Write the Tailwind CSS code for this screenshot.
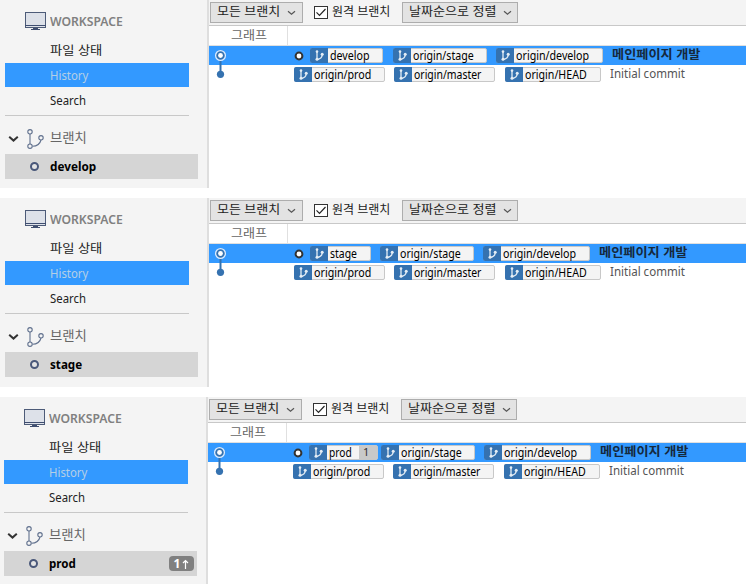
<!DOCTYPE html>
<html lang="ko">
<head>
<meta charset="utf-8">
<title>Branches</title>
<script src="https://cdn.jsdelivr.net/npm/@tailwindcss/browser@4"></script>
</head>
<body class="w-[746px] h-[584px] overflow-hidden bg-white font-['Noto_Sans','Noto_Sans_CJK_KR',sans-serif] text-[12px] leading-[18px] text-[#222]">
<main id="app" class="flex flex-col gap-[10px]"></main>
<script>
const t = (text, w, cls = '') => `<span class="block shrink-0 whitespace-nowrap ${cls}" style="width:${w}px"><span class="inline-block origin-left" data-w="${w}">${text}</span></span>`;

const chevron = `<svg class="shrink-0" width="9" height="6" viewBox="0 0 9 6" fill="none" stroke="#555" stroke-width="1.2"><path d="M1 1.2 4.5 4.2 8 1.2"/></svg>`;

const badge = ([name, w, tw, gap, count]) => `
  <div class="flex shrink-0 h-[15px] rounded-[2px] border border-[#c8c8c8] bg-[#f4f4f4] text-black" style="width:${w}px;margin-right:${gap}px">
    <div class="-my-px -ml-px w-[18px] h-[15px] rounded-l-[2px] bg-[#3572b0] shrink-0 flex items-center justify-center">
      <svg width="12" height="13" viewBox="0 0 12 13" fill="none" stroke="#e4edf5" stroke-width="1.3"><path d="M4 3v7M4.5 10.5Q9 9.5 9.2 6"/><g fill="#e4edf5" stroke="none"><circle cx="4" cy="2.6" r="1.3"/><circle cx="4" cy="10.3" r="1.5"/><circle cx="9.2" cy="5.2" r="1.5"/></g></svg>
    </div>
    <div class="pl-[2px] leading-[14px]">${t(name, tw)}</div>
    ${count ? `<div class="ml-auto w-[18px] bg-[#c9c9c9] text-[#333] text-[11px] leading-[12px] pl-[4px]">${count}</div>` : ''}
  </div>`;

const panel = p => `
<section class="flex ${p.cls}">
  <aside class="w-[207px] shrink-0 bg-[#f4f4f4]">
    <div class="flex pl-[25px] pt-[12px] h-[38px]">
      <svg class="shrink-0" width="21" height="18" viewBox="0 0 21 18"><rect x=".5" y=".5" width="20" height="15" fill="#dde1e9" stroke="#4d5b78"/><path d="M0 13.5h21" stroke="#3f4e70"/><path d="M8 16h5v1h2v1H6v-1h2z" fill="#3f4e70"/></svg>
      ${t('WORKSPACE', 73, 'ml-[4px] pt-px font-semibold text-[#808080]')}
    </div>
    <div class="h-[25px] pl-[50px] leading-[26px]">${t('파일 상태', 52)}</div>
    <div class="h-[24px] ml-[5px] w-[184px] pl-[45px] bg-[#3399ff] text-[#b5cfe6] leading-[25px]">${t('History', 38)}</div>
    <div class="h-[28px] pl-[50px] leading-[27px]">${t('Search', 36)}</div>
    <div class="h-px ml-[5px] w-[184px] bg-[#c8c8c8]"></div>
    <div class="h-[38px] flex items-center pl-[8px] pt-[8px]">
      <svg class="shrink-0" width="11" height="8" viewBox="0 0 11 8" fill="none" stroke="#333" stroke-width="2"><path d="M1.2 1.8 5.5 5.6 9.8 1.8"/></svg>
      <svg class="shrink-0 ml-[8px]" width="17" height="20" viewBox="0 0 17 20" fill="#f4f4f4" stroke="#61718e" stroke-width="1.1"><path d="M3 5v10M5.5 17.3Q12.5 17 14 11" fill="none"/><circle cx="3" cy="2.8" r="2.2"/><circle cx="3" cy="17.2" r="2.2"/><circle cx="14" cy="8.8" r="2.2"/></svg>
      ${t('브랜치', 37, 'ml-[6px] text-[13px] text-[#666] -mt-[4px]')}
    </div>
    <div class="h-[25px] ml-[5px] w-[193px] bg-[#d5d5d5] flex items-center pl-[24px] pr-[3px] text-black">
      <svg class="shrink-0" width="11" height="11" viewBox="0 0 11 11"><circle cx="5.5" cy="5.5" r="3.5" fill="#e4e4e4" stroke="#4a587a" stroke-width="2"/></svg>
      ${t(p.name, p.nw, 'ml-[10px] font-bold')}
      ${p.ahead ? `<div class="ml-auto w-[25px] h-[15px] rounded-[4px] bg-[#808080] text-white font-bold leading-[15px] flex items-center justify-center gap-[2px]"><span>1</span><svg width="7" height="10" viewBox="0 0 7 10" fill="none" stroke="#fff" stroke-width="1.2"><path d="M3.5 10V1.5M1 4l2.5-2.5L6 4"/></svg></div>` : ''}
    </div>
  </aside>
  <div class="w-[2px] shrink-0 bg-[#dedede]"></div>
  <div class="grow min-w-0 bg-white">
    <div class="h-[26px] bg-[#f4f4f4] border-b border-[#c8c8c8] flex pt-[2px] pl-[1px]">
      <div class="w-[93px] h-[21px] shrink-0 border border-[#adadad] bg-[#e3e3e3] flex items-center pl-[6px] pr-[6px] justify-between">${t('모든 브랜치', 63, '-mt-px')}${chevron}</div>
      <div class="ml-[11px] mt-[4px] w-[14px] h-[13px] shrink-0 border border-[#333] bg-white"><svg width="12" height="11" viewBox="0 0 12 11" fill="none" stroke="#222" stroke-width="1.2"><path d="M1.5 5.3 4.5 8.3 10.5 2"/></svg></div>
      ${t('원격 브랜치', 58, 'ml-[4px] pt-px')}
      <div class="ml-[12px] w-[116px] h-[21px] shrink-0 border border-[#adadad] bg-[#e3e3e3] flex items-center pl-[6px] pr-[5px] justify-between">${t('날짜순으로 정렬', 87, '-mt-px')}${chevron}</div>
    </div>
    <div class="h-[20px] border-b border-[#e0e0e0] flex">
      <div class="w-[79px] border-r border-[#e0e0e0] pl-[22px] leading-[19px] text-[#666]">${t('그래프', 36)}</div>
    </div>
    <div class="flex">
      <svg class="shrink-0" width="85" height="38" viewBox="0 0 85 38"><path fill="#3399ff" d="M0 0h85v19H0z"/><path d="M11.5 10v19" stroke="#3572b0" stroke-width="2"/><circle cx="11.5" cy="9.5" r="4.9" fill="#3572b0" stroke="#dcecff" stroke-width="1.3"/><circle cx="11.5" cy="9.5" r="2.4" fill="#fff"/><circle cx="11.5" cy="28.3" r="3.6" fill="#3572b0"/></svg>
      <div class="grow min-w-0">
        <div class="h-[19px] bg-[#3399ff] flex items-center">
          <svg class="shrink-0 mr-[6px]" width="10" height="10" viewBox="0 0 10 10"><circle cx="5" cy="5" r="3.4" fill="#fff" stroke="#333" stroke-width="2"/></svg>
          ${p.refs.map(badge).join('')}
          ${t('메인페이지 개발', 88, '-mt-px font-bold text-[#15293d]')}
        </div>
        <div class="h-[19px] flex items-center">
          ${[['origin/prod',91,57,9],['origin/master',101,67,10],['origin/HEAD',96,62,9]].map(badge).join('')}
          ${t('Initial commit', 75, '-mt-[2px] text-[#555]')}
        </div>
      </div>
    </div>
  </div>
</section>`;

document.getElementById('app').innerHTML = [
  {cls:'h-[188px] w-[746px] shrink-0 overflow-hidden', name:'develop', nw:46, refs:[['develop',73,40,10],['origin/stage',94,61,9],['origin/develop',107,73,9]]},
  {cls:'h-[189px] w-[746px] shrink-0 overflow-hidden', name:'stage', nw:32, refs:[['stage',61,27,9],['origin/stage',94,61,9],['origin/develop',107,73,9]]},
  {cls:'h-[188px] w-[747px] -ml-px shrink-0 overflow-hidden', name:'prod', nw:27, ahead:true, refs:[['prod',69,23,3,'1'],['origin/stage',94,61,9],['origin/develop',107,73,9]]}
].map(panel).join('');

// Scale each label horizontally so it fills its column width exactly.
const fit = () => document.querySelectorAll('[data-w]').forEach(el => {
  el.style.transform = `scaleX(${+el.dataset.w / el.offsetWidth})`;
});
fit();
// Labels change size when styles or fonts arrive late.
const watcher = new ResizeObserver(fit);
document.querySelectorAll('[data-w]').forEach(el => watcher.observe(el));
window.addEventListener('load', fit);
document.fonts.ready.then(fit);
</script>
</body>
</html>
